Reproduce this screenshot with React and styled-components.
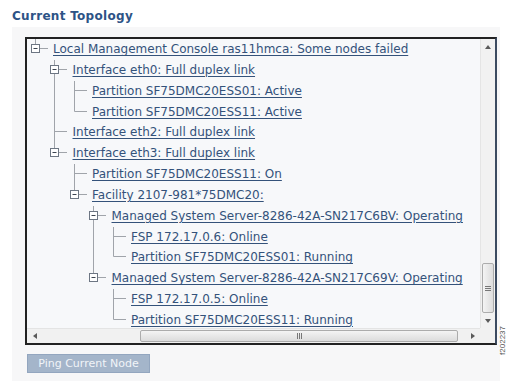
import React from 'react'
import styled, { createGlobalStyle } from 'styled-components'

const GlobalStyle = createGlobalStyle`
  body {
    margin: 0;
    background: #fff;
    font-family: "DejaVu Sans", Verdana, sans-serif;
  }
`

const topology = {
  label: 'Local Management Console ras11hmca: Some nodes failed',
  children: [
    {
      label: 'Interface eth0: Full duplex link',
      children: [
        { label: 'Partition SF75DMC20ESS01: Active' },
        { label: 'Partition SF75DMC20ESS11: Active' },
      ],
    },
    { label: 'Interface eth2: Full duplex link' },
    {
      label: 'Interface eth3: Full duplex link',
      children: [
        { label: 'Partition SF75DMC20ESS11: On' },
        {
          label: 'Facility 2107-981*75DMC20:',
          children: [
            {
              label: 'Managed System Server-8286-42A-SN217C6BV: Operating',
              children: [
                { label: 'FSP 172.17.0.6: Online' },
                { label: 'Partition SF75DMC20ESS01: Running' },
              ],
            },
            {
              label: 'Managed System Server-8286-42A-SN217C69V: Operating',
              children: [
                { label: 'FSP 172.17.0.5: Online' },
                { label: 'Partition SF75DMC20ESS11: Running' },
              ],
            },
          ],
        },
      ],
    },
  ],
}

// flatten tree into rows, remembering which ancestor lines keep going
const flatten = (node, guides = [], last = true, out = []) => {
  out.push({ label: node.label, guides, last, open: !!node.children })
  if (node.children) {
    node.children.forEach((c, i) =>
      flatten(c, [...guides, !last], i === node.children.length - 1, out)
    )
  }
  return out
}

const LINE = '#a0a4aa'

const Connector = ({ last, open }) => (
  <svg width="19.5" height="21" viewBox="0 0 19.5 21">
    <line x1="5.5" y1="0" x2="5.5" y2={last ? 9.5 : 21} stroke={LINE} strokeWidth="1" />
    <line x1="5.5" y1="9.5" x2="18" y2="9.5" stroke={LINE} strokeWidth="1" />
    {open && (
      <g>
        <rect x="1.5" y="5.5" width="8" height="8" fill="#fff" stroke="#6d7683" strokeWidth="1" />
        <line x1="3.5" y1="9.5" x2="7.5" y2="9.5" stroke="#3c4450" strokeWidth="1" />
      </g>
    )}
  </svg>
)

const Guide = ({ through }) => (
  <svg width="19.5" height="21" viewBox="0 0 19.5 21">
    {through && <line x1="5.5" y1="0" x2="5.5" y2="21" stroke={LINE} strokeWidth="1" />}
  </svg>
)

const Arrow = ({ dir }) => {
  const pts = {
    up: '0,4 3,0 6,4',
    down: '0,0 3,4 6,0',
    left: '4,0 0,3 4,6',
    right: '0,0 4,3 0,6',
  }[dir]
  const horiz = dir === 'left' || dir === 'right'
  return (
    <svg width={horiz ? 4 : 6} height={horiz ? 6 : 4} viewBox={horiz ? '0 0 4 6' : '0 0 6 4'}>
      <polygon points={pts} fill="#5a5a5a" />
    </svg>
  )
}

export default function App() {
  const rows = flatten(topology)
  return (
    <Page>
      <GlobalStyle />
      <Title>Current Topology</Title>
      <Panel>
        <TreeBox>
          <Content>
            {rows.map((r, i) => (
              <Row key={i}>
                {r.guides.map((g, j) => (
                  <Guide key={j} through={g} />
                ))}
                <Connector last={r.last} open={r.open} />
                <NodeLink href="#">{r.label}</NodeLink>
              </Row>
            ))}
          </Content>
          <VScroll>
            <ScrollBtn><Arrow dir="up" /></ScrollBtn>
            <VTrack>
              <VThumb>
                <Grip vertical />
              </VThumb>
            </VTrack>
            <ScrollBtn><Arrow dir="down" /></ScrollBtn>
          </VScroll>
          <HScroll>
            <ScrollBtn><Arrow dir="left" /></ScrollBtn>
            <HTrack>
              <HThumb $offset={98}>
                <Grip />
              </HThumb>
            </HTrack>
            <ScrollBtn><Arrow dir="right" /></ScrollBtn>
          </HScroll>
          <Corner />
        </TreeBox>
        <Actions>
          <PingButton disabled>Ping Current Node</PingButton>
        </Actions>
      </Panel>
      <FigureId>f202237</FigureId>
    </Page>
  )
}

const Grip = ({ vertical }) => (
  <GripLines $vertical={vertical}>
    <span />
    <span />
    <span />
  </GripLines>
)

const Page = styled.div`
  position: relative;
  width: 512px;
  height: 386px;
  padding: 9px 0 0 12px;
  box-sizing: border-box;
`

const Title = styled.div`
  font-size: 12px;
  font-weight: bold;
  line-height: 14px;
  letter-spacing: 0.3px;
  color: #2d5386;
`

const Panel = styled.div`
  width: 488px;
  margin-top: 4px;
  padding: 10px 3px 8px 13px;
  box-sizing: border-box;
  background: #f7f7f8;
`

const TreeBox = styled.div`
  width: 472px;
  height: 308px;
  box-sizing: border-box;
  border: 2px solid #222;
  border-right-color: #3b4a60;
  background: #f7f8fa;
  display: grid;
  grid-template-columns: 1fr 15px;
  grid-template-rows: 1fr 15px;
`

const Content = styled.div`
  overflow: hidden;
  padding: 0 0 0 2.5px;
  white-space: nowrap;
`

const Row = styled.div`
  display: flex;
  align-items: flex-start;
  height: 20.85px;
`

const NodeLink = styled.a`
  margin-left: 4px;
  font-size: 12px;
  line-height: 21px;
  color: #34527a;
  text-decoration: underline;
  text-underline-offset: 1.5px;
`

const VScroll = styled.div`
  display: flex;
  flex-direction: column;
  background: #f1f1f1;
  border-left: 1px solid #e4e4e4;
`

const HScroll = styled.div`
  display: flex;
  align-items: stretch;
  background: #f1f1f1;
  border-top: 1px solid #e4e4e4;
`

const ScrollBtn = styled.div`
  flex: 0 0 15px;
  display: flex;
  align-items: center;
  justify-content: center;
`

const VTrack = styled.div`
  flex: 1;
  display: flex;
  flex-direction: column;
  justify-content: flex-end;
  padding: 0 1px;
`

const HTrack = styled.div`
  flex: 1;
  display: flex;
  align-items: stretch;
  padding: 1px 0;
`

const VThumb = styled.div`
  height: 48px;
  border: 1px solid #acacac;
  border-radius: 2px;
  background: linear-gradient(to right, #f4f4f4, #dcdcdc);
  display: flex;
  align-items: center;
  justify-content: center;
`

const HThumb = styled.div`
  margin-left: ${p => p.$offset}px;
  width: 316px;
  border: 1px solid #acacac;
  border-radius: 2px;
  background: linear-gradient(#f4f4f4, #dcdcdc);
  display: flex;
  align-items: center;
  justify-content: center;
`

const GripLines = styled.div`
  display: flex;
  flex-direction: ${p => (p.$vertical ? 'column' : 'row')};
  gap: 1px;
  span {
    display: block;
    background: #777;
    width: ${p => (p.$vertical ? '6px' : '1px')};
    height: ${p => (p.$vertical ? '1px' : '6px')};
  }
`

const Corner = styled.div`
  background: #f1f1f1;
`

const Actions = styled.div`
  display: flex;
  padding: 9px 0 0 2px;
`

const PingButton = styled.button`
  width: 123px;
  height: 19px;
  padding: 0;
  border: 1px solid #93a6bf;
  background: #a4b5ca;
  color: #f1f4f8;
  font-family: "DejaVu Sans", Verdana, sans-serif;
  font-size: 11px;
`

const FigureId = styled.div`
  position: absolute;
  right: 5px;
  top: 326px;
  writing-mode: vertical-rl;
  transform: rotate(180deg);
  font-family: "Liberation Sans", Arial, sans-serif;
  font-size: 8px;
  color: #555;
`
